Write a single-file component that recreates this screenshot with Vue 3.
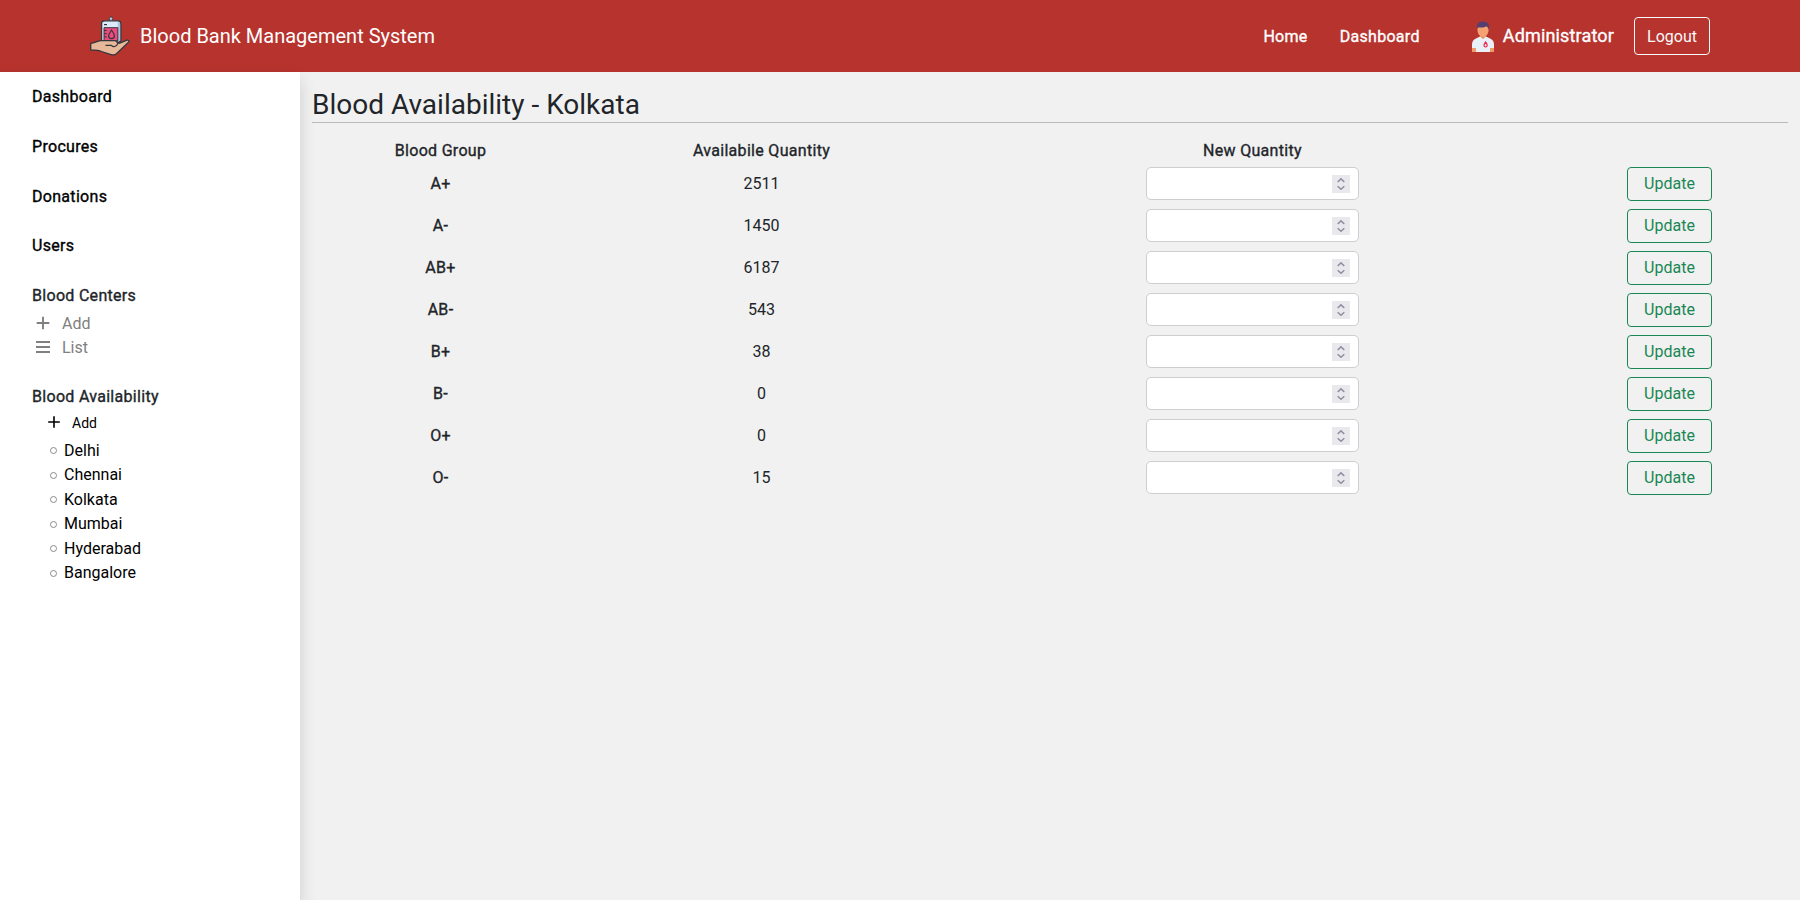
<script setup>
const links = ['Dashboard', 'Procures', 'Donations', 'Users']
const cities = ['Delhi', 'Chennai', 'Kolkata', 'Mumbai', 'Hyderabad', 'Bangalore']
const stock = [
  { group: 'A+', quantity: 2511 },
  { group: 'A-', quantity: 1450 },
  { group: 'AB+', quantity: 6187 },
  { group: 'AB-', quantity: 543 },
  { group: 'B+', quantity: 38 },
  { group: 'B-', quantity: 0 },
  { group: 'O+', quantity: 0 },
  { group: 'O-', quantity: 15 },
]
</script>

<template>
  <div class="page">
    <header class="navbar">
      <a class="brand">
        <svg class="logo" width="40" height="40" viewBox="0 0 40 40">
          <circle cx="21" cy="2.6" r="1.7" fill="#a9d3f5" stroke="#32373e" stroke-width=".8" />
          <path d="M21 3.800v1.400" stroke="#dcecf8" stroke-width="1.600" />
          <rect x="11.600" y="4.800" width="19.200" height="21.500" rx="2.800" fill="#dcebfa" stroke="#32373e" stroke-width="1.300" />
          <path d="M27.800 6h.8a1.600 1.600 0 0 1 1.600 1.600V25h-2.400z" fill="#a9c3df" />
          <path d="M14 8.600h3" stroke="#32373e" stroke-width="1.200" />
          <path d="M14 11.700h13.800V25H14z" fill="#ec4b7c" stroke="#32373e" stroke-width="1" />
          <path d="M14 14.500h2.800M14 17.700h2.800M14 20.900h2.800" stroke="#32373e" stroke-width="1" />
          <path d="M21.500 14.200c1.600 2.300 2.900 3.900 2.900 5.600a2.900 2.900 0 0 1-5.800 0c0-1.700 1.300-3.300 2.900-5.600z" fill="#ec4b7c" stroke="#32373e" stroke-width="1.200" />
          <path d="M.7 27.300C5 27 7.500 24.900 11.500 24.700h12.800c2.300 0 3.200 1.200 3.200 2.500h2.200l7.300-3c1.500-.5 2.600.8 1.500 1.900L26.500 37.800c-1.300.9-2.800 1.300-4.600 1L11.500 35.500c-2.500-1.300-5.500-1.600-10.800-1.700z" fill="#e7b899" stroke="#32373e" stroke-width="1.300" stroke-linejoin="round" />
          <path d="M15.500 29.300h5.800c2 2.200 5 1.700 6.800-2" fill="none" stroke="#32373e" stroke-width="1.200" />
        </svg>
        <span>Blood Bank Management System</span>
      </a>
      <nav class="nav">
        <a class="home">Home</a>
        <a class="dash">Dashboard</a>
        <div class="user">
          <svg width="22" height="31" viewBox="0 0 22 31">
            <path d="M0 24h4v7H0zM18 24h4v7h-4z" fill="#f09a6b" />
            <path d="M8 13h6v4.500l-3 2-3-2z" fill="#e88f60" />
            <path d="M8 15.500 4 17.500q-4 1.500-4 6V27h4v4h14v-4h4v-3.500q0-4.500-4-6l-4-2-3 2.500z" fill="#e9f0f8" />
            <path d="M5.500 5h11v4.500c0 3-2.500 6.500-5.500 6.500s-5.500-3.500-5.500-6.500z" fill="#f5a273" />
            <path d="M5 8V5.500C5 2 7.500.5 11 .5s6 2 6 5V8l-1-.5c-.2-1.500-1-2-2-2C11 7 8.500 6.500 6 6.500z" fill="#563f70" />
            <path d="M13.600 20c1 1.500 2.200 2.700 2.200 4.300a2.200 2.200 0 0 1-4.400 0c0-1.600 1.200-2.800 2.200-4.300z" fill="#e82d55" />
            <path d="M13.600 23v2.400M12.400 24.200h2.400" stroke="#fff" stroke-width=".8" />
          </svg>
          <span>Administrator</span>
        </div>
        <button class="logout">Logout</button>
      </nav>
    </header>

    <div class="body">
      <aside class="sidebar">
        <a v-for="l in links" :key="l" class="link">{{ l }}</a>
        <h2 class="section">Blood Centers</h2>
        <div class="center-item">
          <svg width="14" height="14" viewBox="0 0 14 14"><path d="M7 .7v12.600M.7 7h12.600" /></svg>
          <span>Add</span>
        </div>
        <div class="center-item">
          <svg width="14" height="14" viewBox="0 0 14 14"><path d="M0 2h14M0 7h14M0 12h14" /></svg>
          <span>List</span>
        </div>
        <h2 class="section availability">Blood Availability</h2>
        <div class="add-city">
          <svg width="12" height="12" viewBox="0 0 12 12"><path d="M6 .2v11.600M.2 6h11.600" /></svg>
          <span>Add</span>
        </div>
        <ul class="cities">
          <li v-for="c in cities" :key="c"><i class="ring"></i>{{ c }}</li>
        </ul>
      </aside>

      <main class="main">
        <h1>Blood Availability - Kolkata</h1>
        <div class="table">
          <div class="row head">
            <b>Blood Group</b><b>Availabile Quantity</b><b>New Quantity</b><b></b>
          </div>
          <div v-for="s in stock" :key="s.group" class="row">
            <b>{{ s.group }}</b>
            <span>{{ s.quantity }}</span>
            <div class="field">
              <input type="text" />
              <svg width="18" height="18" viewBox="0 0 18 18">
                <path d="M5.700 7 9 3.900 12.300 7M5.700 11.200 9 14.300l3.300-3.100" />
              </svg>
            </div>
            <button class="update">Update</button>
          </div>
        </div>
      </main>
    </div>
  </div>
</template>

<style>
body {
  background: #f1f1f1;
}
</style>

<style scoped>
.page {
  height: 900px;
  display: flex;
  flex-direction: column;
  overflow: hidden;
  font: 400 16px/24px Roboto, sans-serif;
  color: #212529;
}
.page *, .page {
  box-sizing: border-box;
}
.navbar {
  height: 72px;
  flex: none;
  padding: 0 90px;
  display: flex;
  align-items: center;
  justify-content: space-between;
  background: #b7332e;
  color: #fff;
}
.brand {
  display: flex;
  align-items: center;
  gap: 10px;
  font-size: 20px;
}
.nav {
  display: flex;
  align-items: center;
}
.home,
.dash,
.link,
.section,
b {
  font-weight: 400;
  letter-spacing: 0.3px;
  -webkit-text-stroke: 0.350px currentColor;
}
.home,
.dash {
  padding-top: 2px;
}
.dash {
  margin-left: 32px;
}
.user {
  display: flex;
  align-items: center;
  gap: 9px;
  margin: 0 20px 0 52px;
  font-size: 18px;
  letter-spacing: 0.16px;
  -webkit-text-stroke: 0.350px currentColor;
}
.logout {
  width: 76px;
  height: 38px;
  padding: 2px 0 0;
  border: 1px solid #f8f9fa;
  border-radius: 4px;
  background: none;
  color: #f8f9fa;
  font: inherit;
}
.body {
  flex: 1;
  display: flex;
}
.sidebar {
  width: 300px;
  flex: none;
  padding: 13.400px 32px 0;
  background: #fff;
  box-shadow: 0 8px 16px rgba(0, 0, 0, 0.15);
}
.link {
  display: block;
  height: 49.600px;
  color: #000;
}
.section {
  margin: 0 0 4px;
  font-size: 16px;
  line-height: 24px;
}
.center-item {
  display: flex;
  align-items: center;
  gap: 12px;
  height: 24.400px;
  padding-left: 4px;
  color: #808080;
}
.sidebar svg {
  margin-bottom: 2px;
  fill: none;
  stroke: currentColor;
  stroke-width: 1.900;
}
.availability {
  margin: 24px 0 2px;
}
.add-city {
  display: flex;
  align-items: center;
  gap: 12px;
  height: 24px;
  padding-left: 16px;
  font-size: 14px;
  color: #000;
}
.add-city svg {
  stroke-width: 1.600;
}
.cities {
  margin: 4px 0 0;
  padding: 0 0 0 18px;
  list-style: none;
  line-height: 24.500px;
  color: #000;
}
.cities li {
  display: flex;
  align-items: center;
}
.ring {
  width: 7px;
  height: 7px;
  margin-right: 7px;
  border: 1px solid #8c8c8c;
  border-radius: 50%;
}
.main {
  flex: 1;
  padding: 15px 12px;
}
h1 {
  height: 36px;
  margin: 0 0 15px;
  border-bottom: 1px solid #b9babb;
  font-size: 28px;
  line-height: 36px;
  font-weight: 400;
}
.row {
  display: grid;
  grid-template-columns: 257px 385px 597px 237px;
  align-items: center;
  justify-items: center;
  height: 42px;
}
.head {
  height: 25px;
}
.field {
  width: 213px;
  height: 33px;
  margin-bottom: 1px;
  display: flex;
  align-items: center;
  padding: 0 8px;
  border: 1px solid #cdced0;
  border-radius: 5px;
  background: #fff;
}
.field input {
  flex: 1;
  min-width: 0;
  border: 0;
  outline: 0;
  background: none;
  font: inherit;
}
.field svg {
  background: #e9e9ed;
  fill: none;
  stroke: #8f8f9d;
  stroke-width: 1.500;
}
.update {
  width: 85px;
  height: 34px;
  padding: 0;
  border: 1px solid #198754;
  border-radius: 4px;
  background: none;
  color: #198754;
  font: inherit;
}
</style>
